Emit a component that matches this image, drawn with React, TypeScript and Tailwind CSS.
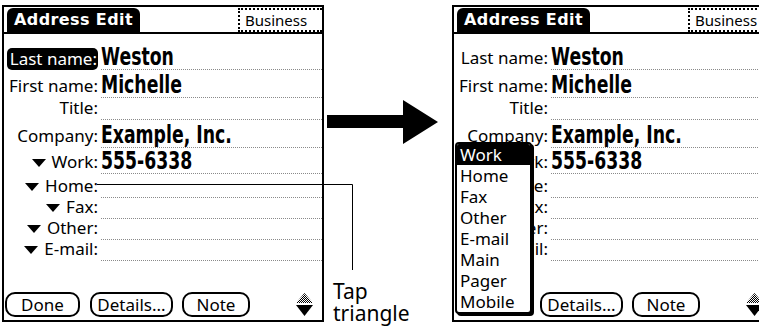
import React from "react";

const LABEL_FONT = { fontFamily: '"Noto Sans", "DejaVu Sans", sans-serif' };
const VALUE_FONT = { fontFamily: '"DejaVu Sans", "Liberation Sans", sans-serif' };
const TITLE_FONT = { fontFamily: '"DejaVu Sans", "Noto Sans", sans-serif' };

type Row = { label: string; value?: string; h: string; tri?: boolean };

const rows: Row[] = [
  { label: "Last name:", value: "Weston", h: "h-[28px]" },
  { label: "First name:", value: "Michelle", h: "h-[28px]" },
  { label: "Title:", h: "h-[22px]" },
  { label: "Company:", value: "Example, Inc.", h: "h-[28px]" },
  { label: "Work:", value: "555-6338", h: "h-[26px]", tri: true },
  { label: "Home:", h: "h-[24px]", tri: true },
  { label: "Fax:", h: "h-[21px]", tri: true },
  { label: "Other:", h: "h-[21px]", tri: true },
  { label: "E-mail:", h: "h-[21px]", tri: true },
];

function Tri() {
  return (
    <svg width="14" height="8" viewBox="0 0 14 8" className="mr-[6px] mb-[5px] shrink-0">
      <polygon points="0,0 14,0 7,8" fill="#000" />
    </svg>
  );
}

function Screen({ highlight, popup }: { highlight?: boolean; popup?: boolean }) {
  const pid = popup ? "dith2" : "dith1";
  return (
    <div className="relative w-[322px] h-[317px] shrink-0 border-2 border-black bg-white flex flex-col">
      {/* header */}
      <div className="h-[27px] flex items-end border-b-2 border-black shrink-0 relative">
        <div
          className="ml-[3px] h-[24px] bg-black text-white rounded-t-[6px] px-[7px] flex items-center text-[16px] font-bold tracking-[0.4px]"
          style={TITLE_FONT}
        >
          Address Edit
        </div>
        <div
          className="ml-auto h-[24px] w-[84px] border-2 border-r-0 border-dotted border-black flex items-center pl-[5px] text-[15px] leading-[20px] text-black"
          style={LABEL_FONT}
        >
          Business
        </div>
      </div>
      {/* rows */}
      <div className="pt-[8px] flex flex-col">
        {rows.map((r, i) => (
          <div key={i} className={`${r.h} flex items-end`}>
            <div className="w-[94px] shrink-0 flex justify-end items-end h-full">
              {highlight && i === 0 ? (
                <div
                  className="ml-[3px] flex-1 h-[22px] bg-black text-white rounded-[5px] flex items-center justify-end pr-[1px] text-[17px] leading-[20px]"
                  style={LABEL_FONT}
                >
                  {r.label}
                </div>
              ) : (
                <div className="flex items-end pb-[2px]">
                  {r.tri && <Tri />}
                  <span className="text-[17px] leading-[20px] text-black" style={LABEL_FONT}>
                    {r.label}
                  </span>
                </div>
              )}
            </div>
            <div className="ml-[3px] flex-1 h-full border-b border-dotted border-[#8a8a8a] flex items-end overflow-hidden">
              {r.value && (
                <span
                  className="block origin-left [transform:scaleX(0.72)] whitespace-nowrap text-[24px] leading-[24px] font-bold text-black"
                  style={VALUE_FONT}
                >
                  {r.value}
                </span>
              )}
            </div>
          </div>
        ))}
      </div>
      {/* buttons */}
      <div className="mt-auto mb-[3px] flex items-end">
        <Btn w="w-[75px]" ml="ml-[1px]" hidden={popup}>
          Done
        </Btn>
        <Btn w="w-[83px]" ml="ml-[10px]">Details...</Btn>
        <Btn w="w-[68px]" ml="ml-[9px]">Note</Btn>
        <svg width="17" height="23" viewBox="0 0 17 23" className="ml-auto mr-[9px] mb-[1px]">
          <defs>
            <pattern id={pid} width="2" height="2" patternUnits="userSpaceOnUse">
              <rect width="2" height="2" fill="#fff" />
              <rect width="1" height="1" fill="#000" />
              <rect x="1" y="1" width="1" height="1" fill="#000" />
            </pattern>
          </defs>
          <polygon points="8.5,0 17,10 0,10" fill={`url(#${pid})`} />
          <polygon points="0,12 17,12 8.5,23" fill="#000" />
        </svg>
      </div>
      {popup && (
        <div
          className="absolute left-[1px] top-[135px] w-[77px] border-2 border-black rounded-[4px] bg-white shadow-[2px_2px_0_#000] flex flex-col overflow-hidden"
          style={LABEL_FONT}
        >
          {["Work", "Home", "Fax", "Other", "E-mail", "Main", "Pager", "Mobile"].map((t, i) => (
            <div
              key={t}
              className={`h-[21px] flex items-center pl-[3px] text-[17px] leading-[20px] ${
                i === 0 ? "bg-black text-white" : "text-black"
              }`}
            >
              {t}
            </div>
          ))}
        </div>
      )}
    </div>
  );
}

function Btn({
  children,
  w,
  ml,
  hidden,
}: {
  children: React.ReactNode;
  w: string;
  ml: string;
  hidden?: boolean;
}) {
  return (
    <div
      className={`${w} ${ml} ${hidden ? "invisible" : ""} h-[25px] shrink-0 border-2 border-black rounded-[10px] flex items-center justify-center text-[17px] leading-[20px] text-black`}
      style={LABEL_FONT}
    >
      {children}
    </div>
  );
}

export default function App() {
  return (
    <div className="relative w-[759px] h-[328px] overflow-hidden bg-white flex items-start pt-[5px] pl-[2px]">
      <Screen highlight />
      <div className="w-[128px] h-[323px] shrink-0 flex flex-col">
        <svg width="111" height="44" viewBox="0 0 111 44" className="mt-[95px] ml-[3px]">
          <polygon points="0,15 76,15 76,0 111,22 76,44 76,28 0,28" fill="#000" />
        </svg>
        <div
          className="mt-auto mb-[4px] ml-[9px] text-[21px] leading-[22px] text-black"
          style={LABEL_FONT}
        >
          <div>Tap</div>
          <div>triangle</div>
        </div>
      </div>
      <Screen popup />
      <svg className="absolute left-0 top-0 pointer-events-none" width="759" height="328">
        <path d="M97 184.5 H352.5 V270" stroke="#000" strokeWidth="1" fill="none" />
      </svg>
    </div>
  );
}
